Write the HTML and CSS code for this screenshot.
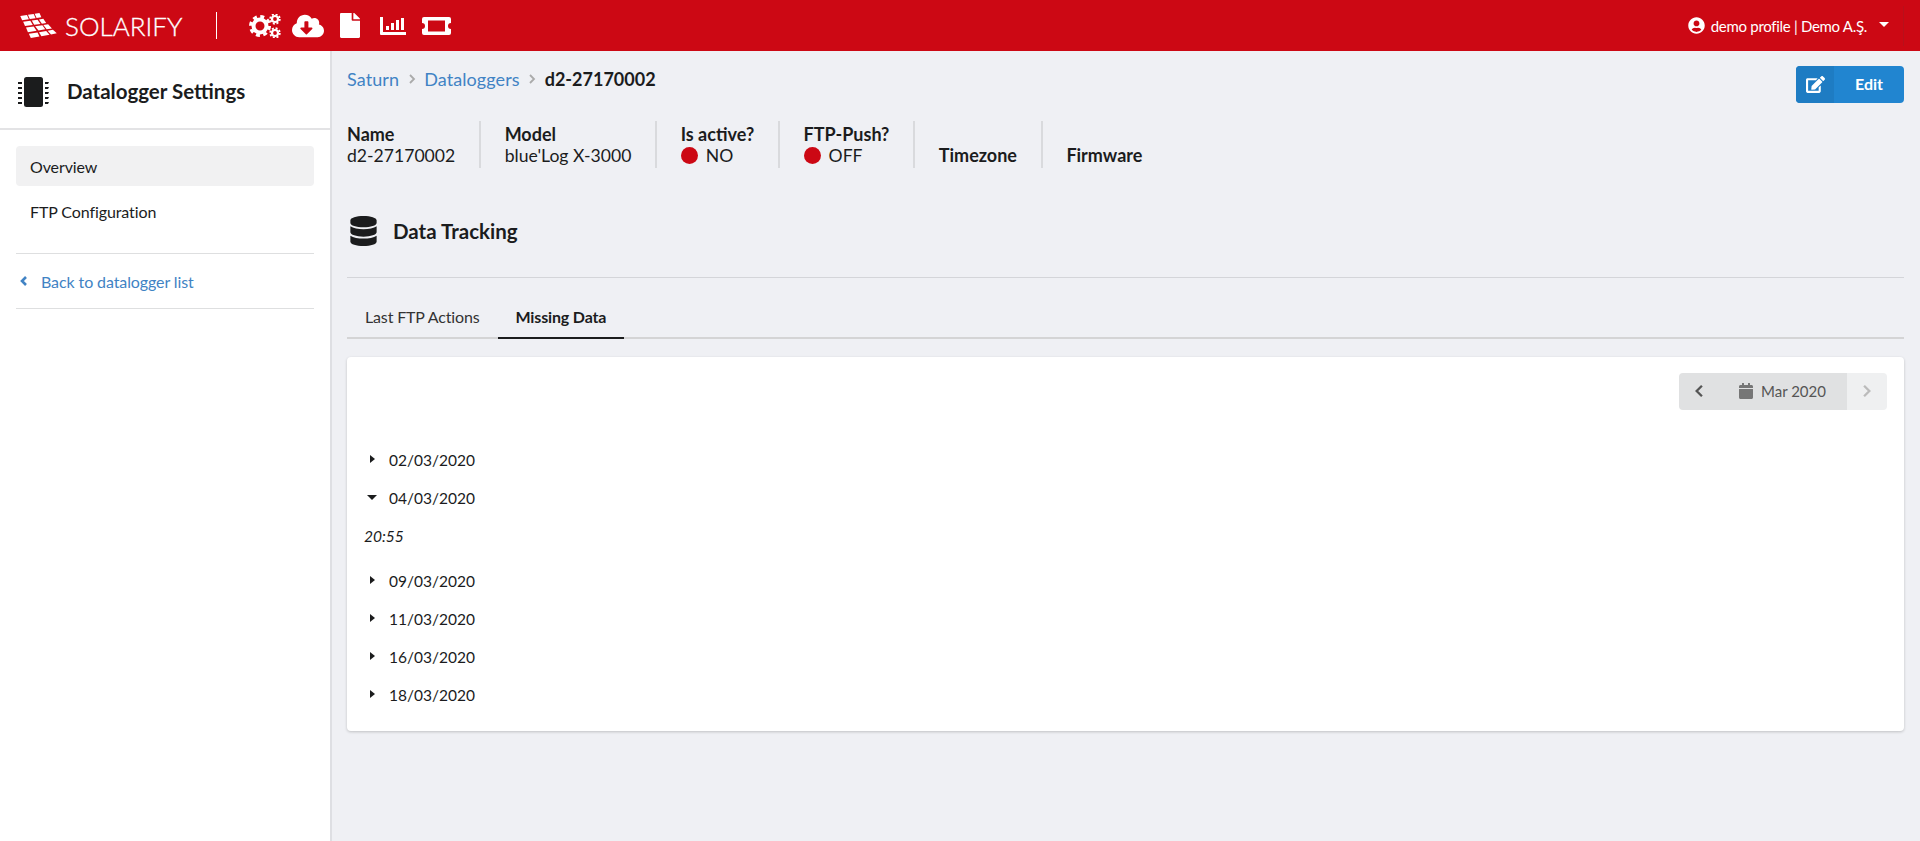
FILE: index.html
```html
<!DOCTYPE html>
<html lang="en">
<head>
<meta charset="utf-8">
<title>Datalogger Settings</title>
<link rel="stylesheet" href="styles.css">
</head>
<body>
  <header class="topbar">
    <a class="logo">
      <svg class="logo-mark" viewBox="0 0 38 26" fill="#fff">
        <polygon points="0,3 7,2 9,6.5 2,7.500"/><polygon points="8,1.800 14,1 16,5.500 10,6.300"/><polygon points="15,0.800 20,0 22,4.500 17,5.300"/>
        <polygon points="3,9 10.500,8 13,12.500 5,13.500"/><polygon points="12,7.800 18,7 21,11.500 14.500,12.300"/><polygon points="19.500,6.800 24,6 27,10.500 22.500,11.300"/>
        <polygon points="6,15 14,14 17,18.500 8,20"/><polygon points="15.500,13.800 23,12.800 26,17 19,18.300"/><polygon points="24,12.500 29,11.800 33,16 27.500,16.800"/>
        <polygon points="9,21.500 18,20.200 20,24.500 11,26"/><polygon points="19.500,20 27,18.800 30.500,22.500 22,24.200"/><polygon points="28.500,18.500 34,17.500 38,21 32,22.300"/>
      </svg>
      <span class="logo-text">SOLARIFY</span>
    </a>
    <span class="top-sep"></span>
    <nav class="top-icons">
      <svg class="ic-cogs" viewBox="0 0 32 24" fill="#fff">
        <circle cx="11" cy="12" r="6.5" fill="none" stroke="#fff" stroke-width="4"/><circle cx="11" cy="12" r="9.5" fill="none" stroke="#fff" stroke-width="3" stroke-dasharray="4 3.46"/>
        <circle cx="26" cy="5" r="3" fill="none" stroke="#fff" stroke-width="2.2"/><circle cx="26" cy="5" r="4.8" fill="none" stroke="#fff" stroke-width="1.8" stroke-dasharray="2 1.77"/>
        <circle cx="26" cy="19" r="3" fill="none" stroke="#fff" stroke-width="2.2"/><circle cx="26" cy="19" r="4.8" fill="none" stroke="#fff" stroke-width="1.8" stroke-dasharray="2 1.77"/>
      </svg>
      <svg class="ic-cloud" viewBox="0 0 640 512" fill="#fff"><path d="M537.6 226.6c4.1-10.7 6.4-22.4 6.4-34.6 0-53-43-96-96-96-19.7 0-38.1 6-53.3 16.2C367 64.2 315.3 32 256 32c-88.4 0-160 71.6-160 160 0 2.7.1 5.4.2 8.1C40.2 219.8 0 273.2 0 336c0 79.5 64.5 144 144 144h368c70.7 0 128-57.3 128-128 0-61.9-44-113.6-102.4-125.4zm-132.9 88.7L299.3 420.7c-6.2 6.2-16.4 6.2-22.6 0L171.3 315.3c-10.1-10.1-2.9-27.3 11.3-27.3H248V176c0-8.8 7.2-16 16-16h48c8.8 0 16 7.2 16 16v112h65.4c14.2 0 21.4 17.2 11.3 27.3z"/></svg>
      <svg class="ic-file" viewBox="0 0 384 512" fill="#fff" preserveAspectRatio="none"><path d="M224 136V0H24C10.7 0 0 10.7 0 24v464c0 13.3 10.7 24 24 24h336c13.3 0 24-10.7 24-24V160H248c-13.2 0-24-10.8-24-24zm160-14.1v6.1H256V0h6.1c6.4 0 12.5 2.5 17 7l97.9 98c4.5 4.5 7 10.6 7 16.9z"/></svg>
      <svg class="ic-chart" viewBox="0 0 26 18" fill="#fff"><path d="M0 0h3v15h23v3H1a1 1 0 0 1-1-1z"/><rect x="6" y="9" width="3" height="4"/><rect x="11" y="6" width="3" height="7"/><rect x="16" y="3" width="3" height="10"/><rect x="21" y="1" width="3" height="12"/></svg>
      <svg class="ic-ticket" viewBox="0 0 29 18"><path fill="#fff" fill-rule="evenodd" d="M2 0h25a2 2 0 0 1 2 2v4a3 3 0 0 0 0 6v4a2 2 0 0 1-2 2H2a2 2 0 0 1-2-2v-4a3 3 0 0 0 0-6V2a2 2 0 0 1 2-2zm4 3.500v11h17v-11z"/></svg>
    </nav>
    <div class="profile">
      <svg class="ic-user" viewBox="0 0 496 512" fill="#fff"><path d="M248 8C111 8 0 119 0 256s111 248 248 248 248-111 248-248S385 8 248 8zm0 96c48.6 0 88 39.4 88 88s-39.4 88-88 88-88-39.4-88-88 39.4-88 88-88zm0 344c-58.7 0-111.3-26.6-146.5-68.2 18.8-35.4 55.6-59.8 98.5-59.8 2.4 0 4.8.4 7.1 1.1 13 4.2 26.6 6.9 40.9 6.9 14.3 0 28-2.7 40.9-6.9 2.3-.7 4.7-1.1 7.1-1.1 42.9 0 79.7 24.4 98.5 59.8C359.3 421.4 306.7 448 248 448z"/></svg>
      <span>demo profile | Demo A.Ş.</span>
      <i class="caret-down white"></i>
    </div>
  </header>

  <div class="layout">
    <aside class="sidebar">
      <div class="side-head">
        <svg class="ic-chip" viewBox="0 0 31 30" fill="#1b1c1d">
          <rect x="6" y="0" width="19" height="30" rx="2.500"/>
          <path d="M0 5h4v2H0zM0 10h4v2H0zM0 15h4v2H0zM0 20h4v2H0zM0 25h4v2H0zM27 5h4l-1 2h-3zM27 10h4l-1 2h-3zM27 15h4l-1 2h-3zM27 20h4l-1 2h-3zM27 25h4l-1 2h-3z"/>
        </svg>
        <h2>Datalogger Settings</h2>
      </div>
      <div class="side-menu">
        <a class="side-item active">Overview</a>
        <a class="side-item">FTP Configuration</a>
      </div>
      <a class="back-link">
        <svg class="ic-back" viewBox="0 0 8 12"><polyline points="6,2 2,6 6,10" fill="none" stroke="#4183c4" stroke-width="2.600"/></svg>
        Back to datalogger list
      </a>
    </aside>

    <main class="content">
      <div class="top-row">
        <div class="breadcrumb">
          <a>Saturn</a>
          <svg class="crumb-sep" viewBox="0 0 8 12"><polyline points="2,2 6,6 2,10" fill="none" stroke="#aaa" stroke-width="1.800"/></svg>
          <a>Dataloggers</a>
          <svg class="crumb-sep" viewBox="0 0 8 12"><polyline points="2,2 6,6 2,10" fill="none" stroke="#aaa" stroke-width="1.800"/></svg>
          <b>d2-27170002</b>
        </div>
        <button class="edit-btn">
          <span class="edit-icon">
            <svg viewBox="0 0 576 512" fill="#fff"><path d="M402.6 83.2l90.2 90.2c3.8 3.8 3.8 10 0 13.8L274.4 405.6l-92.8 10.3c-12.4 1.4-22.9-9.1-21.5-21.5l10.3-92.8L388.8 83.2c3.8-3.8 10-3.8 13.8 0zm162-22.9l-48.8-48.8c-15.2-15.2-39.9-15.2-55.2 0l-35.4 35.4c-3.8 3.8-3.8 10 0 13.8l90.2 90.2c3.8 3.8 10 3.8 13.8 0l35.4-35.4c15.2-15.3 15.2-40 0-55.2zM384 346.2V448H64V128h229.8c3.2 0 6.2-1.3 8.5-3.5l40-40c7.6-7.6 2.2-20.5-8.5-20.5H48C21.5 64 0 85.5 0 112v352c0 26.5 21.5 48 48 48h352c26.5 0 48-21.5 48-48V306.2c0-10.7-12.9-16-20.5-8.5l-40 40c-2.2 2.3-3.5 5.3-3.5 8.5z"/></svg>
          </span>
          <span class="edit-label">Edit</span>
        </button>
      </div>

      <div class="info-row">
        <div class="info-item"><b>Name</b><span>d2-27170002</span></div>
        <div class="info-item"><b>Model</b><span>blue'Log X-3000</span></div>
        <div class="info-item"><b>Is active?</b><span><i class="dot"></i>NO</span></div>
        <div class="info-item"><b>FTP-Push?</b><span><i class="dot"></i>OFF</span></div>
        <div class="info-item"><b>Timezone</b></div>
        <div class="info-item"><b>Firmware</b></div>
      </div>

      <div class="section-head">
        <svg class="ic-db" viewBox="0 0 448 512" fill="#1b1c1d"><path d="M448 73.143v45.714C448 159.143 347.667 192 224 192S0 159.143 0 118.857V73.143C0 32.857 100.333 0 224 0s224 32.857 224 73.143zM448 176v102.857C448 319.143 347.667 352 224 352S0 319.143 0 278.857V176c48.125 33.143 136.208 48.572 224 48.572S399.874 209.143 448 176zm0 160v102.857C448 479.143 347.667 512 224 512S0 479.143 0 438.857V336c48.125 33.143 136.208 48.572 224 48.572S399.874 369.143 448 336z"/></svg>
        <h3>Data Tracking</h3>
      </div>

      <div class="tabs">
        <a class="tab">Last FTP Actions</a>
        <a class="tab active">Missing Data</a>
      </div>

      <section class="card">
        <div class="month-nav">
          <div class="month-main">
            <svg class="month-arrow" viewBox="0 0 8 12"><polyline points="6.500,1.500 2,6 6.500,10.500" fill="none" stroke="#555" stroke-width="2"/></svg>
            <span class="month-label">
              <svg class="ic-cal" viewBox="0 0 448 512" fill="#767676"><path d="M12 192h424c6.6 0 12 5.4 12 12v260c0 26.5-21.5 48-48 48H48c-26.5 0-48-21.5-48-48V204c0-6.6 5.4-12 12-12zm436-44v-36c0-26.5-21.5-48-48-48h-48V12c0-6.6-5.4-12-12-12h-40c-6.6 0-12 5.4-12 12v52H160V12c0-6.6-5.4-12-12-12h-40c-6.6 0-12 5.4-12 12v52H48C21.5 64 0 85.5 0 112v36c0 6.6 5.4 12 12 12h424c6.6 0 12-5.4 12-12z"/></svg>
              Mar 2020
            </span>
          </div>
          <div class="month-next">
            <svg class="month-arrow" viewBox="0 0 8 12"><polyline points="1.500,1.500 6,6 1.500,10.500" fill="none" stroke="#bbb" stroke-width="2"/></svg>
          </div>
        </div>

        <ul class="dates">
          <li><i class="caret-right"></i>02/03/2020</li>
          <li><i class="caret-down"></i>04/03/2020</li>
          <li class="time">20:55</li>
          <li class="after-time"><i class="caret-right"></i>09/03/2020</li>
          <li><i class="caret-right"></i>11/03/2020</li>
          <li><i class="caret-right"></i>16/03/2020</li>
          <li><i class="caret-right"></i>18/03/2020</li>
        </ul>
      </section>
    </main>
  </div>
</body>
</html>
```

FILE: styles.css
```css
* { box-sizing: border-box; }
html, body { height: 100%; }
body {
  margin: 0;
  background: #eff0f4;
  color: #1b1c1d;
  font-family: "Lato", "Helvetica Neue", Arial, sans-serif;
  font-size: 16px;
  overflow: hidden;
}
a { color: #4183c4; text-decoration: none; }
svg { display: block; flex: none; }
h2, h3 { margin: 0; font-weight: 700; }

/* top bar */
.topbar {
  display: flex;
  align-items: center;
  height: 51px;
  padding-left: 20px;
  background: #cc0814;
  color: #fff;
}
.logo { display: flex; align-items: center; color: #fff; }
.logo-mark { width: 37px; height: 25px; }
.logo-text {
  margin-left: 8px;
  font-size: 26px;
  font-weight: 300;
  line-height: 1;
  -webkit-text-stroke: 0.3px #fff;
}
.top-sep { width: 1px; height: 27px; margin-left: 34px; background: #fff; }
.top-icons { display: flex; align-items: center; margin-left: 32px; }
.ic-cogs { width: 32px; height: 24px; }
.ic-cloud { width: 32px; height: 26px; margin-left: 11px; }
.ic-file { width: 20px; height: 25px; margin-left: 16px; }
.ic-chart { width: 26px; height: 18px; margin-left: 20px; }
.ic-ticket { width: 29px; height: 18px; margin-left: 16px; }
.profile {
  display: flex;
  align-items: center;
  height: 40px;
  margin-left: auto;
  margin-right: 16px;
  padding-right: 14px;
  border-right: 1px solid #b8101b;
  font-size: 15px;
  letter-spacing: -0.3px;
}
.ic-user { width: 17px; height: 17px; margin-right: 6px; }
.caret-down.white { margin: 0 0 2px 12px; border-top-color: #fff; }

/* sidebar */
.layout { display: flex; height: 790px; }
.sidebar {
  width: 332px;
  flex: none;
  background: #fff;
  border-right: 2px solid #dedfe3;
}
.side-head {
  display: flex;
  align-items: center;
  height: 79px;
  padding-left: 18px;
  border-bottom: 2px solid #e3e3e5;
}
.ic-chip { width: 31px; height: 30px; margin-top: 4px; }
.side-head h2 { margin: 3px 0 0 18px; font-size: 20.5px; }
.side-menu {
  margin: 16px 16px 0;
  padding-bottom: 17px;
  border-bottom: 1px solid #dedfe0;
}
.side-item {
  display: block;
  height: 40px;
  margin-bottom: 5px;
  padding-left: 14px;
  border-radius: 4px;
  color: #1b1c1d;
  font-size: 16px;
  letter-spacing: -0.1px;
  line-height: 42px;
}
.side-item.active { background: #f1f1f2; }
.back-link {
  display: flex;
  align-items: center;
  height: 55px;
  margin: 0 16px;
  border-bottom: 1px solid #dedfe0;
  letter-spacing: -0.1px;
}
.ic-back { width: 8px; height: 12px; margin: 0 13px 0 4px; }

/* main */
.content { flex: 1; min-width: 0; padding: 15px 16px 0 15px; }
.top-row { display: flex; justify-content: space-between; height: 55px; }
.breadcrumb { display: flex; align-items: center; height: 26px; font-size: 18px; }
.breadcrumb a { letter-spacing: 0.1px; }
.breadcrumb b { font-weight: 700; }
.crumb-sep { width: 8px; height: 12px; margin: 0 8.5px; }
.edit-btn {
  display: flex;
  width: 108px;
  height: 37px;
  padding: 0;
  border: 0;
  border-radius: 4px;
  overflow: hidden;
  background: #2185d0;
  color: #fff;
  font: 700 16px "Lato", sans-serif;
}
.edit-icon {
  display: flex;
  align-items: center;
  justify-content: center;
  width: 38px;
  height: 100%;
  background: #1e7cc3;
}
.edit-icon svg { width: 19px; height: 17px; }
.edit-label { flex: 1; line-height: 35px; }

.info-row { display: flex; align-items: flex-end; height: 47px; }
.info-item {
  display: flex;
  flex-direction: column;
  justify-content: flex-end;
  height: 47px;
  padding: 0 24px 2px 23.4px;
  border-left: 2px solid #d9dadd;
  font-size: 18px;
  line-height: 21px;
}
.info-item:first-child { padding-left: 0; border-left: 0; }
.info-item b { font-weight: 700; }
.info-item span { display: flex; align-items: center; font-size: 17.6px; }
.dot {
  width: 17px;
  height: 17px;
  margin-right: 8px;
  border-radius: 50%;
  background: #cc0814;
}

.section-head {
  display: flex;
  align-items: center;
  height: 110px;
  padding: 16px 0 0 3px;
  border-bottom: 1px solid #d4d5d9;
}
.ic-db { width: 27px; height: 30px; }
.section-head h3 { margin-left: 16px; font-size: 20.5px; }

.tabs {
  display: flex;
  height: 40px;
  margin-top: 21px;
  border-bottom: 2px solid #d4d4d5;
}
.tab {
  height: 40px;
  padding: 0 18px;
  color: #333;
  font-size: 16px;
  letter-spacing: -0.15px;
  line-height: 36px;
}
.tab.active { color: #1b1c1d; font-weight: 700; border-bottom: 2px solid #1b1c1d; }

.card {
  height: 374px;
  margin-top: 18px;
  padding: 16px 17px;
  background: #fff;
  border-radius: 4px;
  box-shadow: 0 1px 3px rgba(0, 0, 0, 0.2);
}
.month-nav { display: flex; justify-content: flex-end; height: 37px; }
.month-main {
  display: flex;
  align-items: center;
  width: 168px;
  padding: 0 0 2px 15px;
  background: #e0e1e2;
  border-radius: 4px 0 0 4px;
  color: #555;
  font-size: 15px;
}
.month-next {
  display: flex;
  align-items: center;
  justify-content: center;
  width: 40px;
  padding-bottom: 2px;
  background: #eff0f1;
  border-radius: 0 4px 4px 0;
}
.month-arrow { width: 10px; height: 14px; }
.month-label { display: flex; align-items: center; margin-left: 35px; }
.ic-cal { width: 14px; height: 16px; margin-right: 8px; }

.dates { list-style: none; margin: 31px 0 0; padding: 0; font-size: 15.5px; }
.dates li { display: flex; align-items: center; height: 38px; padding-left: 3px; }
.dates li.time { padding-left: 0; font-style: italic; }
.dates li.after-time { margin-top: 7px; }
.caret-right {
  width: 0;
  height: 0;
  margin: 0 14px 2px 3px;
  border-left: 5px solid #1b1c1d;
  border-top: 4.5px solid transparent;
  border-bottom: 4.5px solid transparent;
}
.caret-down {
  width: 0;
  height: 0;
  margin: 0 12px 2px 0;
  border-top: 5px solid #1b1c1d;
  border-left: 5px solid transparent;
  border-right: 5px solid transparent;
}
```
